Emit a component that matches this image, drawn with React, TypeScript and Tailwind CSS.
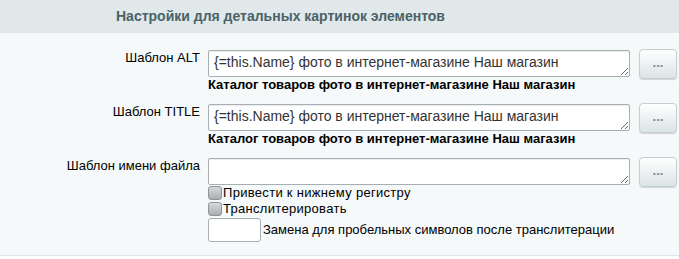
import React from "react"

const font = { fontFamily: '"Liberation Sans", Arial, sans-serif' }

function Dots() {
  return (
    <button
      type="button"
      className="w-[38px] h-[30px] shrink-0 rounded-[4px] border border-[#c5ced1] bg-gradient-to-b from-white to-[#dbe4e6] shadow-[0_1px_1px_rgba(0,0,0,0.15)] text-[#7a888c] text-[13px] font-bold leading-none pb-[3px]"
    >
      ...
    </button>
  )
}

function Box({ value }: { value: string }) {
  return (
    <textarea
      readOnly
      value={value}
      className="block w-[422px] h-[27px] border border-[#a6afb2] rounded-[2px] bg-white px-[5px] pt-[2px] text-[14px] leading-[18px] text-[#333] shadow-[inset_0_1px_1px_rgba(0,0,0,0.08)] resize-y overflow-hidden outline-none"
    />
  )
}

function Check({ label }: { label: string }) {
  return (
    <label className="flex items-center h-[16px] text-[13px] tracking-[0.3px] text-black">
      <span className="w-[14px] h-[14px] rounded-[3px] border border-[#8d9496] bg-gradient-to-b from-[#d8dadb] to-[#a9adae] mr-[1px]" />
      {label}
    </label>
  )
}

export default function App() {
  const rows = [
    { label: "Шаблон ALT", value: "{=this.Name} фото в интернет-магазине Наш магазин", hint: "Каталог товаров фото в интернет-магазине Наш магазин" },
    { label: "Шаблон TITLE", value: "{=this.Name} фото в интернет-магазине Наш магазин", hint: "Каталог товаров фото в интернет-магазине Наш магазин" },
  ]

  return (
    <div className="w-[679px] h-[259px] bg-white" style={font}>
      <div className="h-[33px] bg-[#e0e8ea] pl-[116px] flex items-center text-[14px] font-bold text-[#4b6267]">
        Настройки для детальных картинок элементов
      </div>
      <div className="bg-[#f5f9f9] pt-[17px] h-[223px] border-b border-[#dce5e7]">
        {rows.map(r => (
          <div key={r.label} className="flex mb-[12px]">
            <div className="w-[200px] text-right text-[13px] leading-[15px] text-black">{r.label}</div>
            <div className="ml-[8px]">
              <Box value={r.value} />
              <div className="text-[13px] font-bold leading-[15px] text-black">{r.hint}</div>
            </div>
            <div className="ml-[9px] -mt-[1px]">
              <Dots />
            </div>
          </div>
        ))}
        <div className="flex">
          <div className="w-[200px] text-right text-[13px] leading-[15px] text-black">Шаблон имени файла</div>
          <div className="ml-[8px]">
            <Box value="" />
            <Check label="Привести к нижнему регистру" />
            <Check label="Транслитерировать" />
            <div className="flex items-center mt-[1px]">
              <input
                readOnly
                value=""
                className="w-[53px] h-[24px] border border-[#a6afb2] rounded-[3px] bg-white outline-none"
              />
              <span className="ml-[2px] text-[13px] text-black">Замена для пробельных символов после транслитерации</span>
            </div>
          </div>
          <div className="ml-[9px] -mt-[1px]">
            <Dots />
          </div>
        </div>
      </div>
    </div>
  )
}
